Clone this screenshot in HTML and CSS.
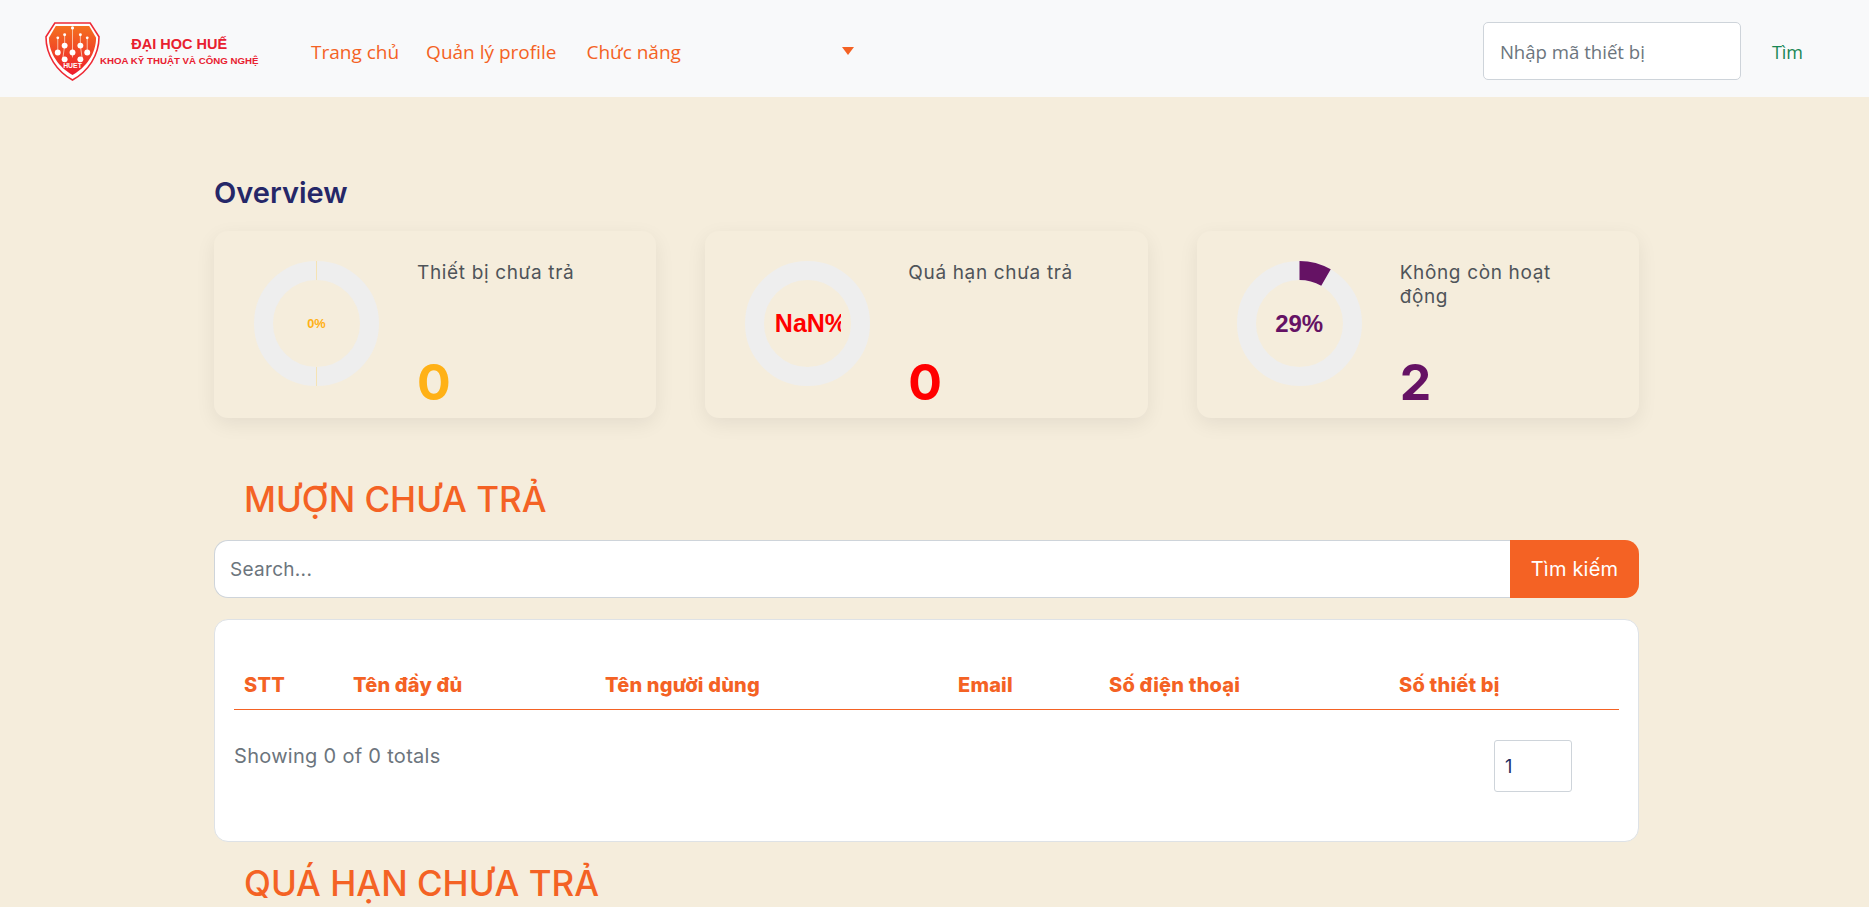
FILE: index.html
```html
<!DOCTYPE html>
<html lang="vi">
<head>
    <meta charset="UTF-8">
    <meta name="viewport" content="width=device-width, initial-scale=1.0">
    <title>Overview</title>
    <link rel="stylesheet" href="styles.css">
</head>
<body>
    <!-- Navbar -->
    <nav class="navbar">
        <a class="brand" href="#">
            <svg class="brand-shield" width="55" height="59" viewBox="0 0 56 60">
                <defs>
                    <linearGradient id="shieldFill" x1="0" y1="0" x2="0" y2="1">
                        <stop offset="0" stop-color="#f4711f"/>
                        <stop offset="1" stop-color="#ee1c2e"/>
                    </linearGradient>
                </defs>
                <path d="M10 1 H46 L55 15 C55 34 44 50 28 59 C12 50 1 34 1 15 Z" fill="#fff" stroke="#ee2a35" stroke-width="1.6"/>
                <path d="M11 4 H45 L52 16 C52 32 42 46 28 54 C14 46 4 32 4 16 Z" fill="url(#shieldFill)"/>
                <g stroke="#fbd9c8" stroke-width="0.8" fill="none">
                    <path d="M28 6 V36"/>
                    <path d="M20 13 V24 M36 13 V24"/>
                    <path d="M13 16 V32 M43 16 V32"/>
                    <path d="M20 24 L18 38 M36 24 L38 38"/>
                </g>
                <g fill="#fff">
                    <circle cx="28" cy="6" r="1.6"/>
                    <circle cx="20" cy="13" r="1.5"/>
                    <circle cx="36" cy="13" r="1.5"/>
                    <circle cx="13" cy="16" r="1.4"/>
                    <circle cx="43" cy="16" r="1.4"/>
                    <circle cx="20" cy="24" r="3"/>
                    <circle cx="36" cy="24" r="3"/>
                    <circle cx="13" cy="31" r="3"/>
                    <circle cx="43" cy="31" r="3"/>
                    <circle cx="28" cy="31" r="3"/>
                    <circle cx="20" cy="38" r="3"/>
                    <circle cx="36" cy="38" r="3"/>
                </g>
                <text x="28" y="47" class="shield-text">HUET</text>
            </svg>
            <span class="brand-text">
                <span class="brand-top">ĐẠI HỌC HUẾ</span>
                <span class="brand-bottom">KHOA KỸ THUẬT VÀ CÔNG NGHỆ</span>
            </span>
        </a>

        <ul class="nav-links">
            <li><a href="#">Trang chủ</a></li>
            <li><a href="#">Quản lý profile</a></li>
            <li class="nav-dropdown"><a href="#">Chức năng</a><span class="caret"></span></li>
        </ul>

        <form class="nav-search">
            <input class="nav-input" type="text" placeholder="Nhập mã thiết bị">
            <button class="nav-btn" type="button">Tìm</button>
        </form>
    </nav>

    <main class="content">
        <h2 class="overview-title">Overview</h2>

        <!-- Stat cards -->
        <div class="cards">
            <div class="card">
                <div class="donut">
                    <svg width="125" height="125" viewBox="0 0 125 125">
                        <circle cx="62.5" cy="62.5" r="53" class="donut-ring"/>
                        <path d="M62.5 0 V19 M62.5 106 V125" class="donut-tick"/>
                    </svg>
                    <span class="donut-label label-small yellow">0%</span>
                </div>
                <div class="card-info">
                    <p class="card-title">Thiết bị chưa trả</p>
                    <p class="card-value yellow">0</p>
                </div>
            </div>

            <div class="card">
                <div class="donut">
                    <svg width="125" height="125" viewBox="0 0 125 125">
                        <circle cx="62.5" cy="62.5" r="53" class="donut-ring"/>
                    </svg>
                    <span class="donut-label label-clip red">NaN%</span>
                </div>
                <div class="card-info">
                    <p class="card-title">Quá hạn chưa trả</p>
                    <p class="card-value red">0</p>
                </div>
            </div>

            <div class="card">
                <div class="donut">
                    <svg width="125" height="125" viewBox="0 0 125 125">
                        <circle cx="62.5" cy="62.5" r="53" class="donut-ring"/>
                        <path d="M62.5 9.5 A53 53 0 0 1 89 16.6" class="donut-arc"/>
                    </svg>
                    <span class="donut-label purple">29%</span>
                </div>
                <div class="card-info">
                    <p class="card-title">Không còn hoạt động</p>
                    <p class="card-value purple">2</p>
                </div>
            </div>
        </div>

        <h2 class="section-title">MƯỢN CHƯA TRẢ</h2>

        <div class="search-bar">
            <input class="search-input" type="text" placeholder="Search...">
            <button class="search-btn" type="button">Tìm kiếm</button>
        </div>

        <!-- Table card -->
        <div class="table-card">
            <table class="data-table">
                <thead>
                    <tr>
                        <th class="col-stt">STT</th>
                        <th class="col-name">Tên đầy đủ</th>
                        <th class="col-user">Tên người dùng</th>
                        <th class="col-email">Email</th>
                        <th class="col-phone">Số điện thoại</th>
                        <th>Số thiết bị</th>
                    </tr>
                </thead>
            </table>
            <div class="table-footer">
                <span class="showing">Showing 0 of 0 totals</span>
                <input class="page-input" type="number" value="1">
            </div>
        </div>

        <h2 class="section-title section-next">QUÁ HẠN CHƯA TRẢ</h2>
    </main>
</body>
</html>
```

FILE: styles.css
```css
/* Global Styles */
html, body {
    height: 907px;
    overflow: hidden;
}

body {
    margin: 0;
    background-color: #f5eddc;
    font-family: 'Inter', 'Liberation Sans', sans-serif;
    color: #4f5459;
}

h2, p, ul {
    margin: 0;
    padding: 0;
}

/* Navbar */
.navbar {
    display: flex;
    align-items: center;
    height: 97px;
    padding: 5px 0 0 45px;
    background-color: #f8f9fa;
    box-sizing: border-box;
}

.brand {
    display: flex;
    align-items: center;
    width: 266px;
    text-decoration: none;
}

.brand-shield {
    flex: none;
}

.shield-text {
    font-family: 'Liberation Sans', sans-serif;
    font-size: 7px;
    font-weight: 700;
    fill: #fff;
    text-anchor: middle;
}

.brand-text {
    display: flex;
    flex-direction: column;
    align-items: center;
    gap: 3px;
    font-family: 'Liberation Sans', sans-serif;
    font-weight: 700;
    color: #e8202f;
}

.brand-top {
    font-size: 14.5px;
    line-height: 16px;
}

.brand-bottom {
    font-size: 9.7px;
    line-height: 12px;
    white-space: nowrap;
}

.nav-links {
    display: flex;
    align-items: center;
    gap: 27px;
    margin-top: 2px;
    list-style: none;
    font-family: 'Open Sans', sans-serif;
    font-size: 19px;
}

.nav-links a {
    color: #f46224;
    text-decoration: none;
}

.nav-dropdown {
    display: flex;
    align-items: center;
    width: 268px;
    margin-left: 3px;
    justify-content: space-between;
}

.caret {
    width: 0;
    height: 0;
    margin-top: -2px;
    border-left: 6.5px solid transparent;
    border-right: 6.5px solid transparent;
    border-top: 8px solid #f46224;
}

.nav-search {
    display: flex;
    align-items: center;
    margin-left: auto;
    margin-right: 66px;
}

.nav-input {
    width: 258px;
    height: 58px;
    padding: 0 16px;
    box-sizing: border-box;
    border: 1px solid #ced4da;
    border-radius: 5px;
    background: #fff;
    font-family: 'Open Sans', sans-serif;
    font-size: 18.6px;
}

.nav-input::placeholder {
    color: #6c757d;
}

.nav-btn {
    margin: 2px 0 0 31px;
    padding: 0;
    border: none;
    background: none;
    color: #198754;
    font-family: 'Open Sans', sans-serif;
    font-size: 18px;
}

/* Main content */
.content {
    width: 1425px;
    margin-left: 214px;
}

.overview-title {
    padding-top: 79px;
    font-size: 29px;
    line-height: 34px;
    font-weight: 600;
    color: #252768;
}

/* Stat cards */
.cards {
    display: grid;
    grid-template-columns: repeat(3, 1fr);
    gap: 49px;
    margin-top: 21px;
}

.card {
    display: flex;
    height: 187px;
    padding: 30px 40px 0;
    box-sizing: border-box;
    border-radius: 14px;
    background-color: #f5eddc;
    box-shadow: 0 6px 20px rgba(0, 0, 0, 0.07);
}

.donut {
    display: grid;
    flex: none;
    width: 125px;
    height: 125px;
    place-items: center;
}

.donut svg,
.donut-label {
    grid-area: 1 / 1;
}

.donut-ring {
    fill: none;
    stroke: #eeeeee;
    stroke-width: 19;
}

.donut-tick {
    stroke: #f5e3b4;
    stroke-width: 1;
    fill: none;
}

.donut-arc {
    fill: none;
    stroke: #651264;
    stroke-width: 19;
}

.donut-label {
    font-family: 'Liberation Sans', sans-serif;
    font-size: 24px;
    font-weight: 700;
}

.label-small {
    font-size: 12.8px;
}

.label-clip {
    width: 66px;
    overflow: hidden;
    white-space: nowrap;
    font-size: 25px;
}

.card-info {
    display: flex;
    flex-direction: column;
    margin-left: 38px;
    width: 190px;
}

.card-title {
    font-size: 19px;
    line-height: 24px;
    letter-spacing: 0.65px;
    color: #4f5459;
}

.card-value {
    margin-top: auto;
    padding-bottom: 7px;
    font-size: 50px;
    line-height: 58px;
    font-weight: 700;
}

.yellow {
    color: #ffb116;
}

.red {
    color: #ff0000;
}

.purple {
    color: #651264;
}

/* Sections */
.section-title {
    margin-top: 58px;
    padding-left: 30px;
    font-size: 35px;
    line-height: 46px;
    font-weight: 500;
    color: #f46224;
}

.section-next {
    margin-top: 18px;
}

.search-bar {
    display: flex;
    height: 58px;
    margin-top: 18px;
}

.search-input {
    flex: 1;
    padding: 0 15px;
    border: 1px solid #ced4da;
    border-right: none;
    border-radius: 14px 0 0 14px;
    background: #fff;
    font-family: 'Inter', sans-serif;
    font-size: 19px;
    letter-spacing: 0.3px;
}

.search-input::placeholder {
    color: #6c757d;
}

.search-btn {
    width: 129px;
    border: none;
    border-radius: 0 14px 14px 0;
    background-color: #f46224;
    color: #fff;
    font-family: 'Inter', sans-serif;
    font-size: 20px;
    letter-spacing: 0.2px;
}

/* Table card */
.table-card {
    height: 223px;
    margin-top: 21px;
    padding: 0 19px;
    box-sizing: border-box;
    border: 1px solid #dee2e6;
    border-radius: 14px;
    background-color: #fff;
}

.data-table {
    width: 100%;
    margin-top: 42px;
    border-collapse: separate;
    border-spacing: 0;
    table-layout: fixed;
}

.data-table th {
    height: 48px;
    padding: 0 10px 2px;
    box-sizing: border-box;
    border-bottom: 1px solid #f46224;
    text-align: left;
    font-size: 20px;
    font-weight: 800;
    letter-spacing: 0.2px;
    color: #f46224;
    white-space: nowrap;
}

.col-stt { width: 109px; }
.col-name { width: 252px; }
.col-user { width: 353px; }
.col-email { width: 151px; }
.col-phone { width: 290px; }

.table-footer {
    display: flex;
    justify-content: space-between;
    align-items: flex-start;
    padding-top: 30px;
}

.showing {
    margin-top: 2px;
    font-size: 20px;
    line-height: 28px;
    letter-spacing: 0.3px;
    color: #6c757d;
}

.page-input {
    width: 78px;
    height: 52px;
    margin-right: 47px;
    padding: 0 10px;
    box-sizing: border-box;
    border: 1px solid #ced4da;
    border-radius: 3px;
    font-family: 'Inter', sans-serif;
    font-size: 18px;
    color: #212c5f;
    appearance: textfield;
}
```
